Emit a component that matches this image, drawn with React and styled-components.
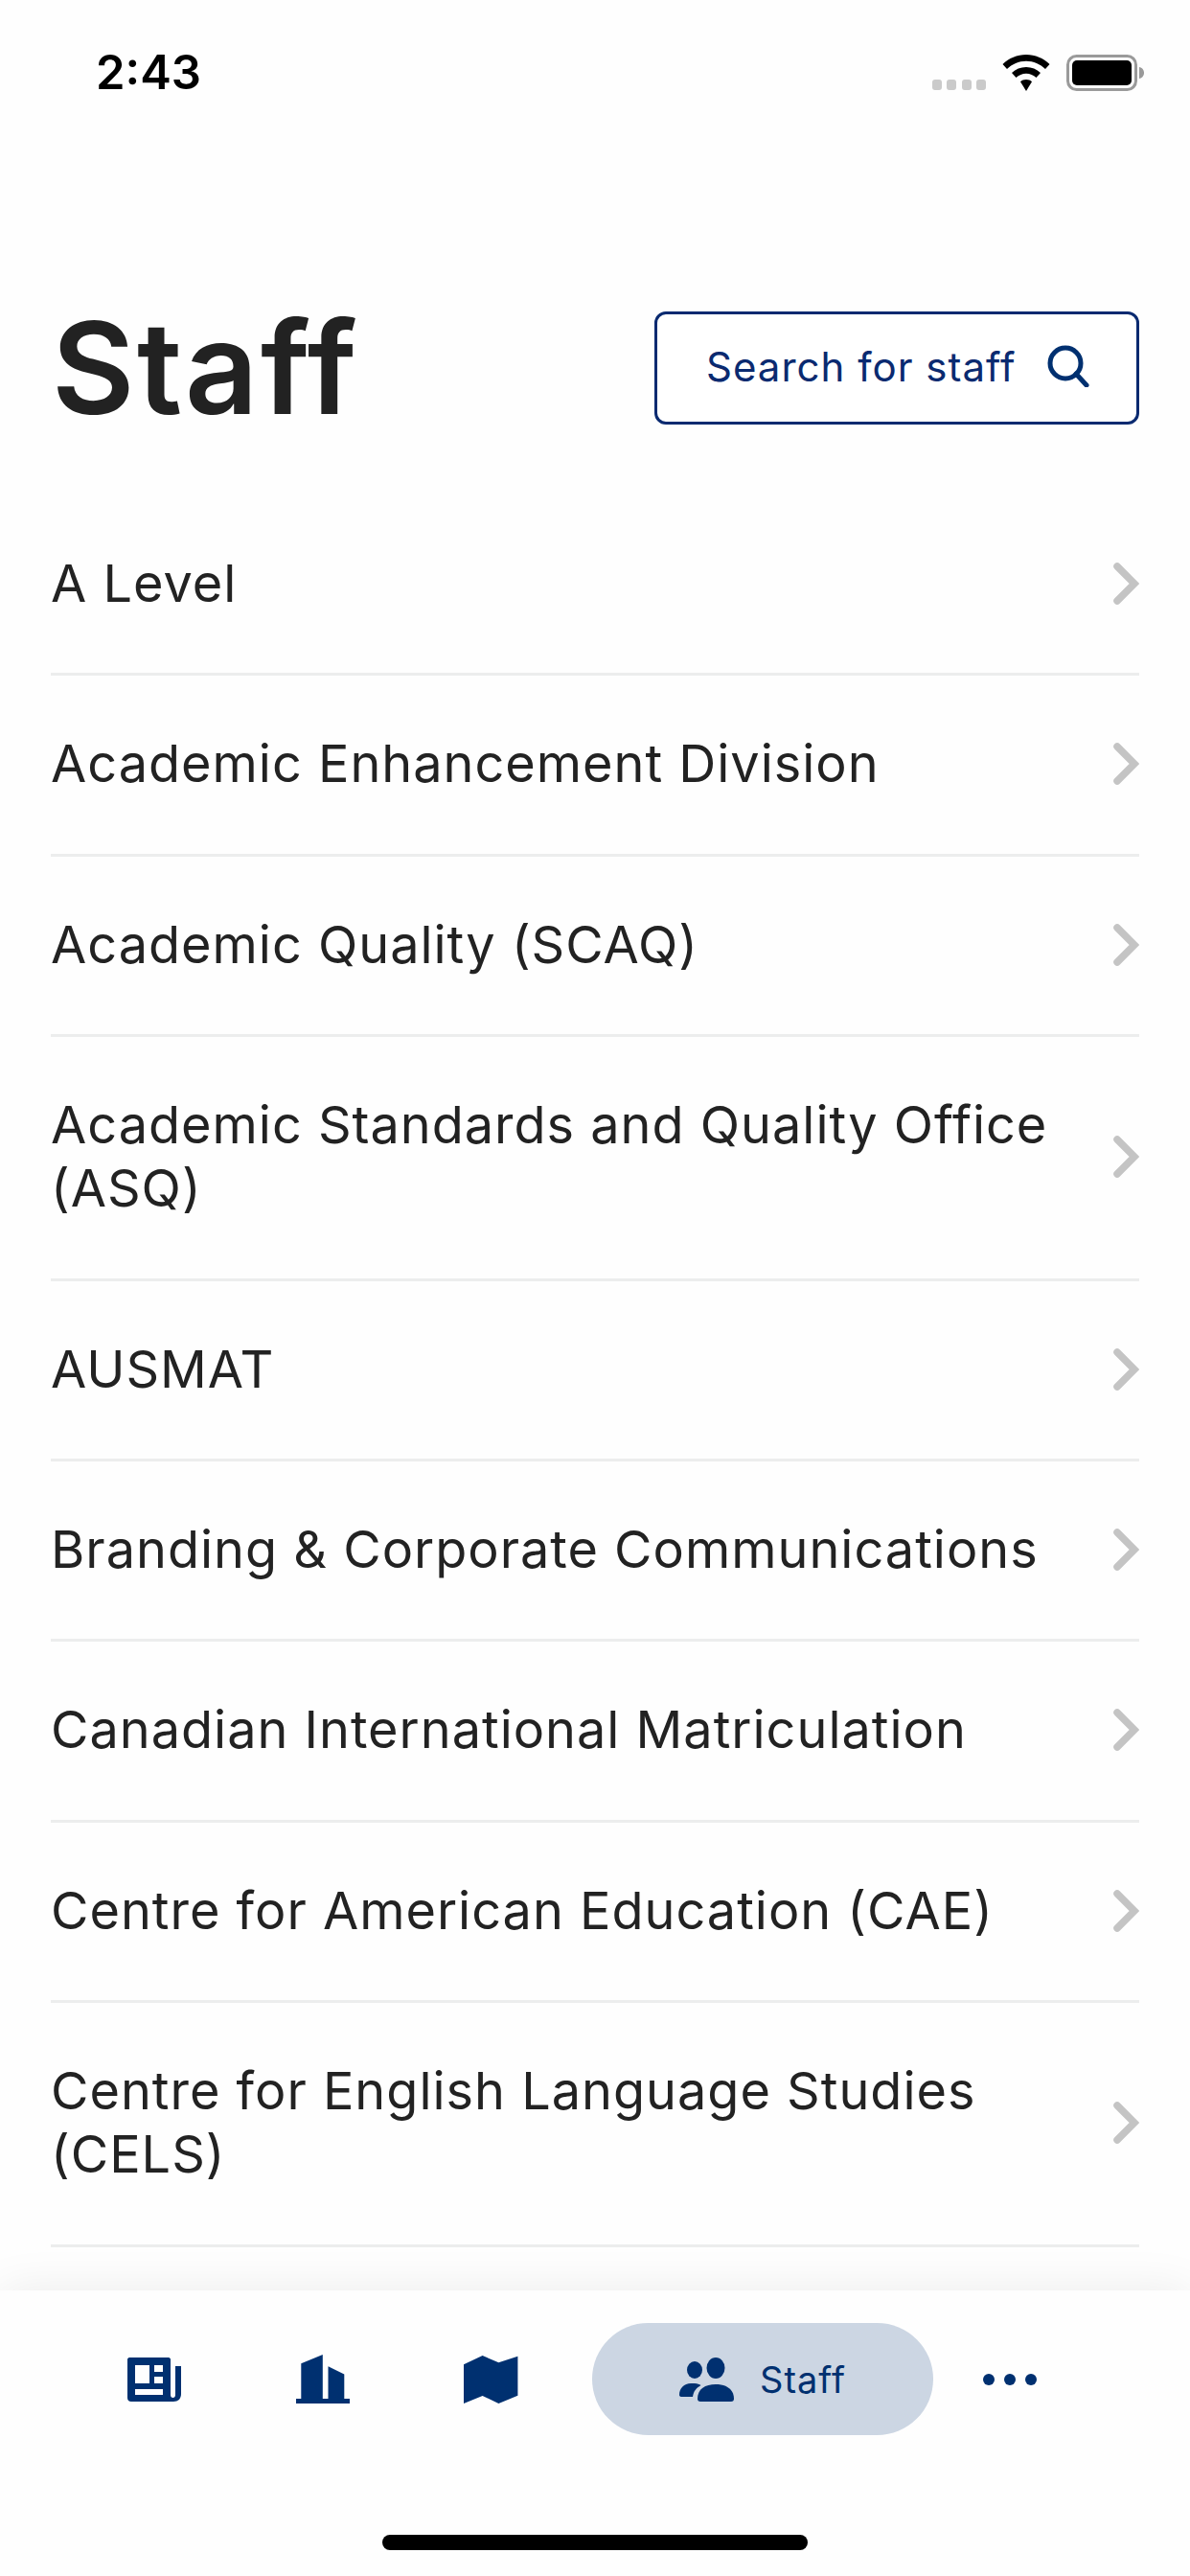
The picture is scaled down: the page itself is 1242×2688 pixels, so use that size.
import React from "react";
import styled, { createGlobalStyle } from "styled-components";

const NAVY = "#003070";

const GlobalStyle = createGlobalStyle`
  html, body {
    margin: 0;
    padding: 0;
    background: #fff;
  }
`;

const Screen = styled.div`
  width: 1242px;
  height: 2688px;
  display: flex;
  flex-direction: column;
  overflow: hidden;
  background: #fefefe;
  font-family: Inter, "Liberation Sans", sans-serif;
  color: #222;
`;

// Status bar

const StatusBar = styled.div`
  height: 150px;
  flex: none;
  box-sizing: border-box;
  padding: 54px 47px 0 100px;
  display: flex;
  justify-content: space-between;
  align-items: flex-start;
`;

const Clock = styled.span`
  font-size: 49px;
  line-height: 44px;
  font-weight: 600;
  color: #000;
`;

const StatusIcons = styled.div`
  display: flex;
  align-items: flex-end;
  gap: 17px;
  padding-top: 3px;
`;

const SignalDots = styled.div`
  display: flex;
  gap: 5.5px;
  margin-bottom: 1px;
`;

const SignalDot = styled.i`
  width: 10px;
  height: 11px;
  border-radius: 3px;
  background: #cacaca;
`;

// Header

const Header = styled.div`
  flex: none;
  box-sizing: border-box;
  height: 118px;
  margin: 175px 53px 0;
  display: flex;
  justify-content: space-between;
  align-items: center;
`;

const Title = styled.h1`
  margin: 0 0 0 1px;
  font-size: 133px;
  line-height: 118px;
  font-weight: 600;
  letter-spacing: 2.5px;
  color: #222;
`;

const SearchButton = styled.button`
  width: 506px;
  height: 118px;
  box-sizing: border-box;
  border: 3px solid #0a2a70;
  border-radius: 12px;
  background: #fff;
  padding: 0 49px 4px 51px;
  display: flex;
  justify-content: space-between;
  align-items: center;
  font-family: inherit;
  font-size: 42px;
  letter-spacing: 1px;
  color: #0a2a70;
`;

// List

const List = styled.div`
  flex: 1;
  min-height: 0;
  overflow: hidden;
  margin: 74px 53px 0;
`;

const Row = styled.div`
  box-sizing: border-box;
  min-height: 188.4px;
  display: flex;
  align-items: center;
  justify-content: space-between;
  gap: 40px;
  padding: 59px 0 60.4px;
  border-bottom: 3px solid #eceded;
`;

const RowLabel = styled.span`
  font-size: 54px;
  line-height: 66px;
  letter-spacing: 1px;
  color: #222;
`;

// Tab bar

const TabBar = styled.div`
  position: relative;
  flex: none;
  height: 298px;
  box-sizing: border-box;
  padding: 34px 0 0 133px;
  background: #fefefe;
  box-shadow: 0 0 46px rgba(0, 0, 0, 0.08);
`;

const Tabs = styled.div`
  display: flex;
  align-items: center;
  height: 117px;
`;

const Tab = styled.div`
  flex: none;
  width: ${(p) => p.$width}px;
  display: flex;
  align-items: center;
`;

const ActivePill = styled.div`
  flex: none;
  width: 356px;
  height: 117px;
  margin-right: 52px;
  border-radius: 59px;
  background: #ccd6e3;
  display: flex;
  align-items: center;
  justify-content: center;
  gap: 27px;
  font-size: 38px;
  letter-spacing: 1px;
  color: ${NAVY};
`;

const HomeBarWrap = styled.div`
  display: flex;
  justify-content: center;
  margin: 104px 0 0 -133px;
`;

const HomeBar = styled.div`
  width: 444px;
  height: 16px;
  border-radius: 8px;
  background: #000;
`;

// Icons

const Wifi = () => (
  <svg width="50" height="38" viewBox="0 0 50 38">
    <path d="M25 0C15.500 0 7 3.700 0.500 10L5 15C10.300 9.800 17.300 6.700 25 6.700S39.700 9.800 45 15L49.500 10C43 3.700 34.500 0 25 0Z" fill="#000" />
    <path d="M25 13C19.200 13 14 15.300 10 19L14.500 24C17.300 21.400 21 19.800 25 19.800S32.700 21.400 35.500 24L40 19C36 15.300 30.800 13 25 13Z" fill="#000" />
    <path d="M25 26C22.600 26 20.500 26.900 19 28.300L25 38L31 28.300C29.500 26.900 27.400 26 25 26Z" fill="#000" />
  </svg>
);

const Battery = () => (
  <svg width="82" height="38" viewBox="0 0 82 38">
    <rect x="1.500" y="1.500" width="71" height="35" rx="9" fill="none" stroke="#9a9a9a" strokeWidth="3" />
    <rect x="6" y="6" width="62" height="26" rx="5" fill="#000" />
    <path d="M76 13C79 13.500 81 16 81 19S79 24.500 76 25Z" fill="#9a9a9a" />
  </svg>
);

const SearchIcon = () => (
  <svg width="44" height="44" viewBox="0 0 44 44" fill="none" stroke={NAVY} strokeWidth="5">
    <circle cx="19" cy="19" r="16" />
    <path d="M30 30L41 42" strokeLinecap="round" />
  </svg>
);

const Chevron = () => (
  <svg width="27" height="44" viewBox="0 0 27 44" fill="none" stroke="#c4c4c4" strokeWidth="7.500" strokeLinecap="round" strokeLinejoin="miter" style={{ flex: "none" }}>
    <path d="M4 4L22 22L4 40" />
  </svg>
);

const NewsIcon = () => (
  <svg width="57" height="46" viewBox="0 0 57 46">
    <path
      fillRule="evenodd"
      fill={NAVY}
      d="M2 0H43C44 0 45 1 45 2V39C45 41 46 42 47.500 42S50 41 50 39V9H56V38C56 43 53 46 48 46H4C1.500 46 0 44.500 0 42V2C0 1 1 0 2 0ZM8 8V27H23V8ZM28 8V15H37V8ZM28 20V27H37V20ZM8 33V39H37V33Z"
    />
  </svg>
);

const BuildingIcon = () => (
  <svg width="56" height="51" viewBox="0 0 56 51">
    <path fill={NAVY} d="M0 46H5.300V9.300L27.800 0V46H33.500V12.300L50.300 20.600V46H56V51H0Z" />
  </svg>
);

const MapIcon = () => (
  <svg width="57" height="50" viewBox="0 0 57 50">
    <path fill={NAVY} d="M0 9.300L19.600 0L36.400 7.300L56.400 0.700V41.700L36.400 50L19.600 42L0 50Z" />
  </svg>
);

const UsersIcon = () => (
  <svg width="57" height="46" viewBox="0 0 57 46">
    <ellipse cx="16" cy="13" rx="8" ry="9" fill={NAVY} />
    <ellipse cx="38" cy="11" rx="9.500" ry="11" fill={NAVY} />
    <path fill={NAVY} d="M0 39C0 32 5 27 12 27H16C19 27 21 28 22.500 29C17.500 32 15 35 14 41H3C1 41 0 40.500 0 39Z" />
    <path fill={NAVY} d="M19 43C19 33 27 28 38 28S57 33 57 43C57 45 56 46 54 46H22C20 46 19 45 19 43Z" />
  </svg>
);

const DotsIcon = () => (
  <svg width="57" height="12" viewBox="0 0 57 12">
    <circle cx="6" cy="6" r="6" fill={NAVY} />
    <circle cx="28" cy="6" r="6" fill={NAVY} />
    <circle cx="50" cy="6" r="6" fill={NAVY} />
  </svg>
);

const departments = [
  "A Level",
  "Academic Enhancement Division",
  "Academic Quality (SCAQ)",
  "Academic Standards and Quality Office (ASQ)",
  "AUSMAT",
  "Branding & Corporate Communications",
  "Canadian International Matriculation",
  "Centre for American Education (CAE)",
  "Centre for English Language Studies (CELS)",
];

const App = () => {
  return (
    <>
      <GlobalStyle />
      <Screen>
        <StatusBar>
          <Clock>2:43</Clock>
          <StatusIcons>
            <SignalDots>
              <SignalDot />
              <SignalDot />
              <SignalDot />
              <SignalDot />
            </SignalDots>
            <Wifi />
            <Battery />
          </StatusIcons>
        </StatusBar>

        <Header>
          <Title>Staff</Title>
          <SearchButton>
            Search for staff
            <SearchIcon />
          </SearchButton>
        </Header>

        <List>
          {departments.map((name) => (
            <Row key={name}>
              <RowLabel>{name}</RowLabel>
              <Chevron />
            </Row>
          ))}
        </List>

        <TabBar>
          <Tabs>
            <Tab $width={176}>
              <NewsIcon />
            </Tab>
            <Tab $width={175}>
              <BuildingIcon />
            </Tab>
            <Tab $width={134}>
              <MapIcon />
            </Tab>
            <ActivePill>
              <UsersIcon />
              Staff
            </ActivePill>
            <Tab $width={57}>
              <DotsIcon />
            </Tab>
          </Tabs>
          <HomeBarWrap>
            <HomeBar />
          </HomeBarWrap>
        </TabBar>
      </Screen>
    </>
  );
};

export default App;
